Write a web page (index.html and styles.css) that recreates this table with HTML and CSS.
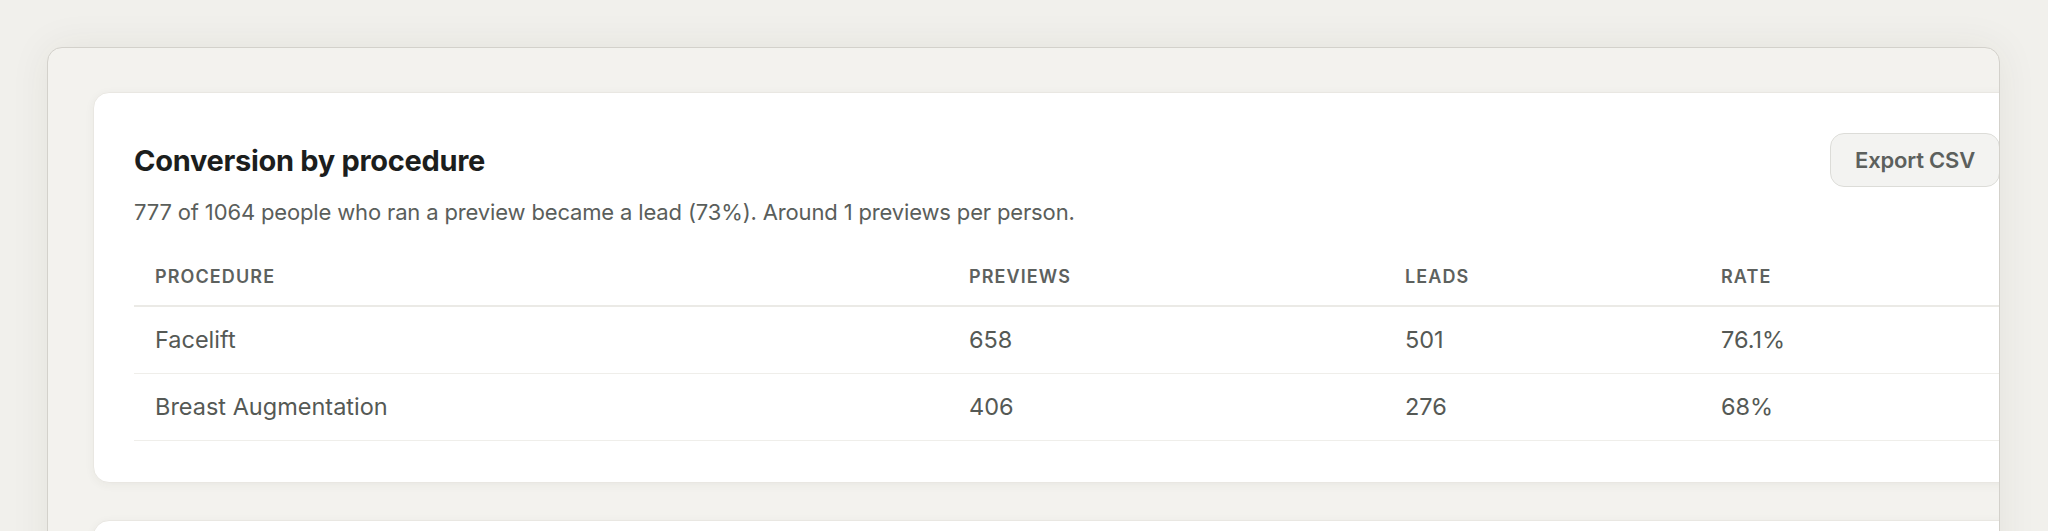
FILE: index.html
```html
<!DOCTYPE html>
<html lang="en">
<head>
<meta charset="utf-8">
<title>Conversion by procedure</title>
<link rel="stylesheet" href="styles.css">
</head>
<body>
<div class="frame">
  <section class="card">
    <div class="card-head">
      <h2 class="title">Conversion by procedure</h2>
      <button class="btn">Export CSV</button>
    </div>
    <p class="sub">777 of 1064 people who ran a preview became a lead (73%). Around 1 previews per person.</p>
    <table class="tbl">
      <colgroup>
        <col class="c1"><col class="c2"><col class="c3"><col class="c4">
      </colgroup>
      <thead>
        <tr><th>Procedure</th><th>Previews</th><th>Leads</th><th>Rate</th></tr>
      </thead>
      <tbody>
        <tr><td>Facelift</td><td>658</td><td>501</td><td>76.1%</td></tr>
        <tr><td>Breast Augmentation</td><td>406</td><td>276</td><td>68%</td></tr>
      </tbody>
    </table>
  </section>
  <section class="card card-next"></section>
</div>
</body>
</html>
```
FILE: styles.css
```css
html, body {
  margin: 0;
  height: 100%;
}
body {
  background: #f1f0ec;
  font-family: Inter, Roboto, "Liberation Sans", sans-serif;
  padding: 47px 48px 0 47px;
  overflow: hidden;
  box-sizing: border-box;
}
.frame {
  box-sizing: border-box;
  width: 1953px;
  height: 700px;
  background: #f3f2ee;
  border: 1px solid #d3d1cb;
  border-radius: 15px;
  box-shadow: 0 0 40px rgba(60, 50, 30, 0.07);
  padding: 44px 0 0 45px;
  display: flex;
  flex-direction: column;
  gap: 37px;
  overflow: hidden;
}
.card {
  box-sizing: border-box;
  flex-shrink: 0;
  width: 1948px;
  background: #ffffff;
  border: 1px solid #e9e7e2;
  border-radius: 16px;
  box-shadow: 0 2px 10px rgba(60, 50, 30, 0.05);
  padding: 40px 40px 41px 40px;
}
.card-next {
  height: 200px;
}
.card-head {
  display: flex;
  justify-content: space-between;
  align-items: center;
  height: 54px;
}
.title {
  margin: 0;
  font-size: 29px;
  font-weight: 700;
  color: #1c1e1d;
  letter-spacing: -0.3px;
}
.btn {
  box-sizing: border-box;
  height: 54px;
  padding: 0 24px;
  border: 1px solid #dcdcd8;
  border-radius: 14px;
  background: #f3f3f1;
  font-family: Inter, Roboto, "Liberation Sans", sans-serif;
  font-size: 22px;
  font-weight: 600;
  color: #5c605d;
  letter-spacing: -0.2px;
}
.sub {
  margin: 10px 0 0 0;
  font-size: 22px;
  line-height: 30px;
  color: #5a5e5b;
  letter-spacing: -0.15px;
}
.tbl {
  width: 100%;
  table-layout: fixed;
  border-collapse: collapse;
  margin-top: 20px;
}
.c1 { width: 814px; }
.c2 { width: 436px; }
.c3 { width: 316px; }
.tbl th {
  text-align: left;
  height: 59px;
  padding: 0 21px;
  font-size: 18px;
  font-weight: 600;
  letter-spacing: 1.1px;
  text-transform: uppercase;
  color: #5d615e;
  border-bottom: 2px solid #ebeae6;
  box-sizing: border-box;
}
.tbl td {
  height: 67px;
  padding: 0 21px;
  font-size: 23.5px;
  color: #555955;
  border-bottom: 1px solid #efeeea;
  box-sizing: border-box;
}
```
